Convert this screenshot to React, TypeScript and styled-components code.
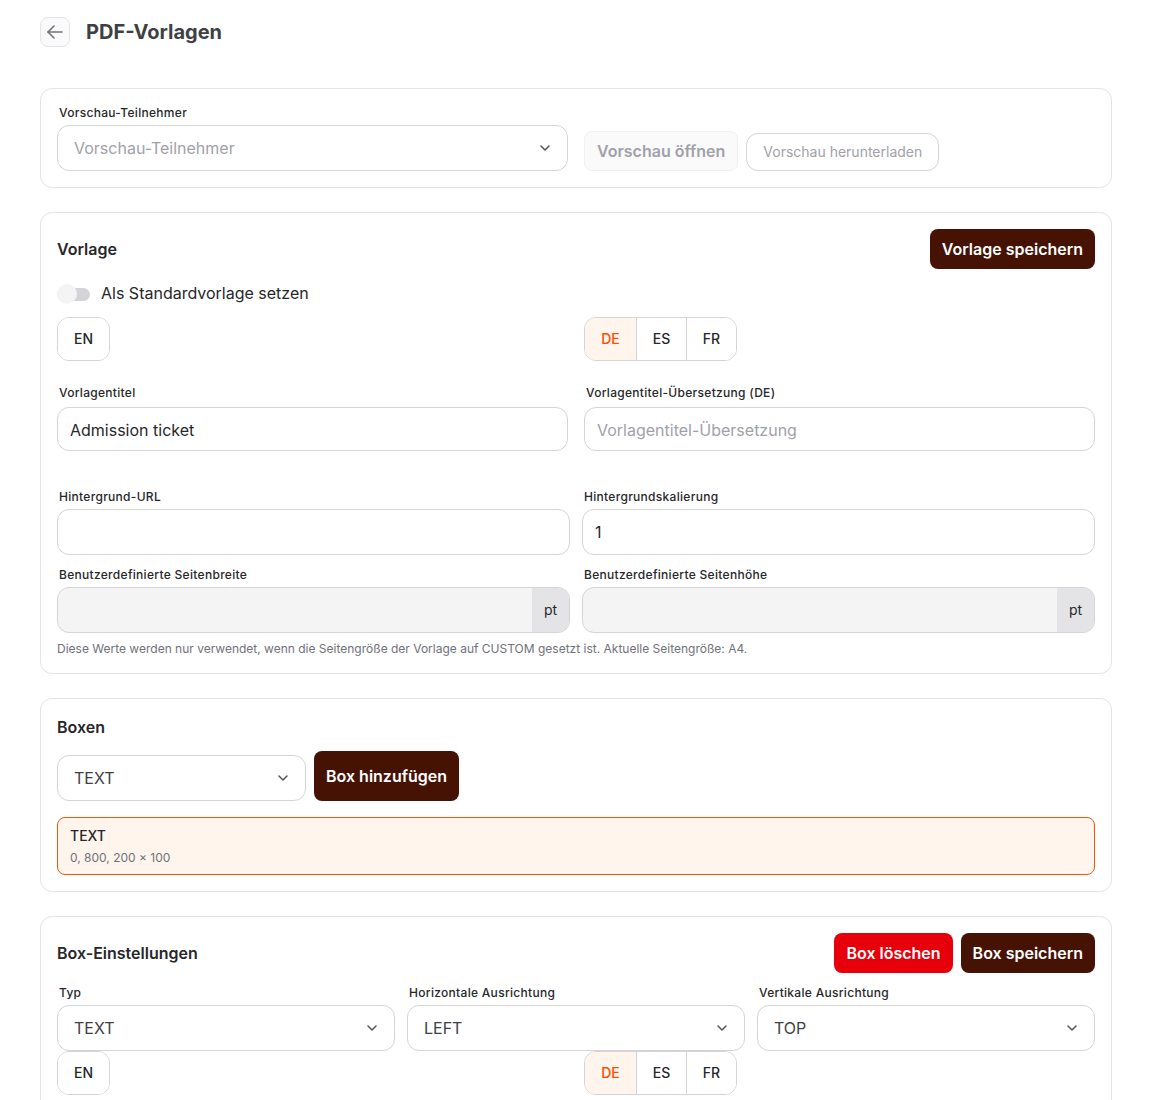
import React from "react";
import styled, { createGlobalStyle } from "styled-components";
import { ChevronDown } from "lucide-react";

const Global = createGlobalStyle`
  html, body { margin: 0; padding: 0; background: #fff; }
  body { font-family: Inter, "Liberation Sans", sans-serif; color: #27272a; height: 1100px; overflow: hidden; }
  * { box-sizing: border-box; }
`;

const Page = styled.div`
  height: 1100px;
  overflow: hidden;
  padding: 17px 40px 0;
`;
const Header = styled.header`
  display: flex;
  align-items: center;
  gap: 16px;
  height: 30px;
  margin-bottom: 41px;
`;
const BackButton = styled.button`
  width: 30px;
  height: 30px;
  padding: 0;
  display: flex;
  align-items: center;
  justify-content: center;
  background: #fafafa;
  border: 1px solid #e4e4e7;
  border-radius: 8px;
  color: #71717a;
`;
const Title = styled.h1`
  margin: 0;
  font-size: 20px;
  font-weight: 700;
  line-height: 30px;
  color: #3f3f46;
`;
const Card = styled.section<{ $h?: number }>`
  border: 1px solid #e4e4e7;
  border-radius: 12px;
  padding: 16px;
  margin-bottom: 24px;
  background: #fff;
  ${(p) => (p.$h ? `height: ${p.$h}px;` : "")}
`;
const PreviewRow = styled.div`
  display: grid;
  grid-template-columns: 511px 1fr;
  gap: 16px;
  align-items: end;
`;
const Field = styled.div`
  display: flex;
  flex-direction: column;
  min-width: 0;
`;
const Label = styled.label<{ $gap?: number }>`
  display: block;
  font-size: 12px;
  line-height: 16px;
  font-weight: 500;
  letter-spacing: 0.3px;
  color: #27272a;
  padding-left: 2px;
  margin-bottom: ${(p) => p.$gap ?? 4}px;
`;
const SelectBox = styled.div<{ $w?: number; $muted?: boolean }>`
  display: flex;
  align-items: center;
  justify-content: space-between;
  height: 46px;
  ${(p) => (p.$w ? `width: ${p.$w}px;` : "")}
  padding: 0 14px 0 16px;
  border: 1px solid #d4d4d8;
  border-radius: 12px;
  background: #fff;
  font-size: 16px;
  color: ${(p) => (p.$muted ? "#a1a1aa" : "#3f3f46")};
  svg { color: #52525b; flex: none; }
`;
const ButtonGroup = styled.div`
  display: flex;
  align-items: flex-end;
  gap: 8px;
`;
const GhostButton = styled.button`
  height: 40px;
  padding: 0 12px;
  border: 1px solid #f0f0f1;
  border-radius: 8px;
  background: #fafafa;
  color: #a1a1aa;
  font: 600 16px Inter, sans-serif;
`;
const OutlineButton = styled.button`
  height: 38px;
  padding: 0 16px 2px;
  border: 1px solid #d4d4d8;
  border-radius: 12px;
  background: #fff;
  color: #a1a1aa;
  font: 400 14px Inter, sans-serif;
`;
const CardHead = styled.div`
  display: flex;
  align-items: center;
  justify-content: space-between;
  height: 40px;
`;
const CardTitle = styled.h2<{ $standalone?: boolean }>`
  margin: 0;
  font-size: 16px;
  font-weight: 600;
  color: #27272a;
  ${(p) => (p.$standalone ? "padding-top: 2px; margin-bottom: 14px;" : "")}
`;
const Primary = styled.button<{ $danger?: boolean }>`
  height: 40px;
  padding: 0 12px;
  border: none;
  border-radius: 8px;
  background: ${(p) => (p.$danger ? "#e7000b" : "#461204")};
  color: #fff;
  font: 600 16px Inter, sans-serif;
`;
const HeadActions = styled.div`
  display: flex;
  gap: 8px;
`;
const ToggleRow = styled.div`
  display: flex;
  align-items: center;
  gap: 11px;
  height: 24px;
  margin: 12px 0;
  font-size: 16px;
  color: #27272a;
`;
const Toggle = styled.span`
  position: relative;
  display: block;
  width: 33px;
  height: 13px;
  margin-top: 2px;
  border-radius: 7px;
  background: #d4d4d8;
  &::after {
    content: "";
    position: absolute;
    left: 0;
    top: -4px;
    width: 20px;
    height: 20px;
    border-radius: 50%;
    background: #f4f4f5;
  }
`;
const TwoCols = styled.div<{ $gap?: number; $mb?: number }>`
  display: grid;
  grid-template-columns: 1fr 1fr;
  gap: ${(p) => p.$gap ?? 16}px;
  margin-bottom: ${(p) => p.$mb ?? 0}px;
`;
const Langs = styled.div`
  display: inline-flex;
  height: 44px;
  border: 1px solid #d4d4d8;
  border-radius: 12px;
  overflow: hidden;
  justify-self: start;
`;
const Lang = styled.span<{ $active?: boolean }>`
  display: flex;
  align-items: center;
  justify-content: center;
  width: 50px;
  padding-bottom: 1px;
  font-size: 14px;
  font-weight: 500;
  background: ${(p) => (p.$active ? "#fff5ed" : "#fff")};
  color: ${(p) => (p.$active ? "#ff4d00" : "#27272a")};
  & + & { border-left: 1px solid #d4d4d8; }
  &:first-child { width: 51px; }
`;
const Input = styled.input<{ $h?: number }>`
  width: 100%;
  height: ${(p) => p.$h ?? 44}px;
  padding: ${(p) => (p.$h ? "0" : "1px")} 12px 0;
  border: 1px solid #d4d4d8;
  border-radius: 12px;
  background: #fff;
  outline: none;
  font: 400 16px Inter, sans-serif;
  color: #27272a;
  &::placeholder { color: #a1a1aa; }
`;
const AddonField = styled.div`
  display: flex;
  height: 46px;
  border: 1px solid #d4d4d8;
  border-radius: 12px;
  overflow: hidden;
  background: #f4f4f5;
`;
const AddonInput = styled.div`
  flex: 1;
`;
const Addon = styled.span`
  display: flex;
  align-items: center;
  justify-content: center;
  width: 37px;
  padding-bottom: 1px;
  background: #e4e4e7;
  font-size: 14px;
  color: #27272a;
`;
const Note = styled.p`
  margin: 8px 0 0;
  font-size: 12px;
  line-height: 16px;
  color: #71717a;
`;
const BoxRow = styled.div`
  display: flex;
  align-items: flex-end;
  gap: 8px;
  margin: 0 0 16px;
  ${Primary} { height: 50px; }
`;
const BoxItem = styled.div`
  height: 58px;
  padding: 8px 12px;
  border: 1px solid #f5540f;
  border-radius: 8px;
  background: #fff5ed;
`;
const BoxName = styled.div`
  font-size: 14px;
  line-height: 20px;
  font-weight: 500;
  color: #27272a;
`;
const BoxMeta = styled.div`
  font-size: 12px;
  line-height: 16px;
  margin-top: 4px;
  color: #71717a;
`;
const ThreeCols = styled.div`
  display: grid;
  grid-template-columns: repeat(3, 1fr);
  gap: 12px;
  margin-top: 12px;
`;
const LangSpacer = styled.div`
  height: 24px;
`;

const Chevron = () => <ChevronDown size={16} strokeWidth={2.25} />;

const BackArrow = () => (
  <svg width="24" height="24" viewBox="0 0 24 24" fill="none" stroke="currentColor" strokeWidth="1.6" strokeLinecap="round" strokeLinejoin="round">
    <path d="M19 12H5" />
    <path d="M11 6l-6 6 6 6" />
  </svg>
);

const LangSwitch = () => (
  <TwoCols>
    <Langs><Lang>EN</Lang></Langs>
    <Langs>
      <Lang $active>DE</Lang>
      <Lang>ES</Lang>
      <Lang>FR</Lang>
    </Langs>
  </TwoCols>
);

export default function App() {
  return (
    <Page>
      <Global />
      <Header>
        <BackButton aria-label="Zurück"><BackArrow /></BackButton>
        <Title>PDF-Vorlagen</Title>
      </Header>

      <Card>
        <PreviewRow>
          <Field>
            <Label>Vorschau-Teilnehmer</Label>
            <SelectBox $muted>Vorschau-Teilnehmer<Chevron /></SelectBox>
          </Field>
          <ButtonGroup>
            <GhostButton>Vorschau öffnen</GhostButton>
            <OutlineButton>Vorschau herunterladen</OutlineButton>
          </ButtonGroup>
        </PreviewRow>
      </Card>

      <Card>
        <CardHead>
          <CardTitle>Vorlage</CardTitle>
          <Primary>Vorlage speichern</Primary>
        </CardHead>
        <ToggleRow><Toggle />Als Standardvorlage setzen</ToggleRow>
        <LangSwitch />
        <LangSpacer />
        <TwoCols $mb={38}>
          <Field>
            <Label $gap={6}>Vorlagentitel</Label>
            <Input defaultValue="Admission ticket" />
          </Field>
          <Field>
            <Label $gap={6}>Vorlagentitel-Übersetzung (DE)</Label>
            <Input placeholder="Vorlagentitel-Übersetzung" />
          </Field>
        </TwoCols>
        <TwoCols $gap={12} $mb={12}>
          <Field>
            <Label>Hintergrund-URL</Label>
            <Input $h={46} />
          </Field>
          <Field>
            <Label>Hintergrundskalierung</Label>
            <Input $h={46} defaultValue="1" />
          </Field>
        </TwoCols>
        <TwoCols $gap={12}>
          <Field>
            <Label>Benutzerdefinierte Seitenbreite</Label>
            <AddonField><AddonInput /><Addon>pt</Addon></AddonField>
          </Field>
          <Field>
            <Label>Benutzerdefinierte Seitenhöhe</Label>
            <AddonField><AddonInput /><Addon>pt</Addon></AddonField>
          </Field>
        </TwoCols>
        <Note>Diese Werte werden nur verwendet, wenn die Seitengröße der Vorlage auf CUSTOM gesetzt ist. Aktuelle Seitengröße: A4.</Note>
      </Card>

      <Card>
        <CardTitle $standalone>Boxen</CardTitle>
        <BoxRow>
          <SelectBox $w={249}>TEXT<Chevron /></SelectBox>
          <Primary>Box hinzufügen</Primary>
        </BoxRow>
        <BoxItem>
          <BoxName>TEXT</BoxName>
          <BoxMeta>0, 800, 200 × 100</BoxMeta>
        </BoxItem>
      </Card>

      <Card $h={300}>
        <CardHead>
          <CardTitle>Box-Einstellungen</CardTitle>
          <HeadActions>
            <Primary $danger>Box löschen</Primary>
            <Primary>Box speichern</Primary>
          </HeadActions>
        </CardHead>
        <ThreeCols>
          <Field>
            <Label>Typ</Label>
            <SelectBox>TEXT<Chevron /></SelectBox>
          </Field>
          <Field>
            <Label>Horizontale Ausrichtung</Label>
            <SelectBox>LEFT<Chevron /></SelectBox>
          </Field>
          <Field>
            <Label>Vertikale Ausrichtung</Label>
            <SelectBox>TOP<Chevron /></SelectBox>
          </Field>
        </ThreeCols>
        <LangSwitch />
      </Card>
    </Page>
  );
}
